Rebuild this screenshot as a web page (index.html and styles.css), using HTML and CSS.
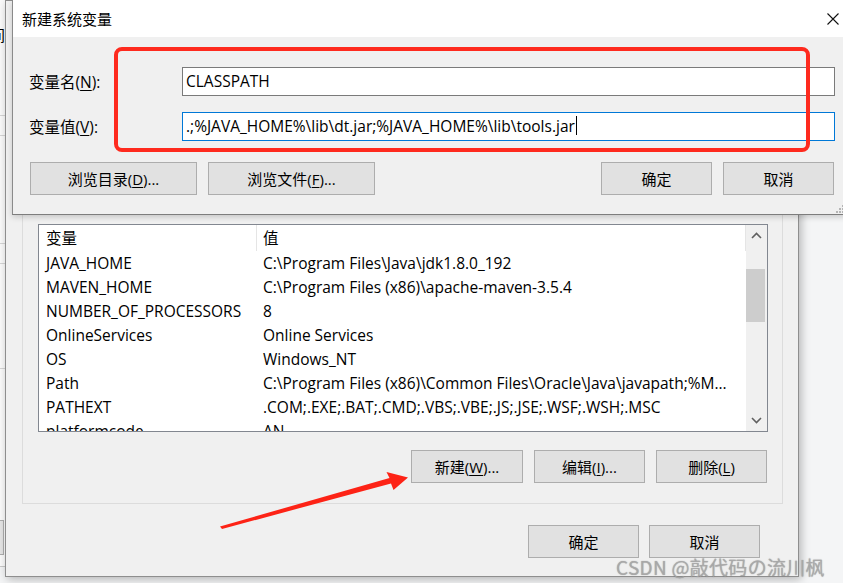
FILE: index.html
```html
<!DOCTYPE html>
<html lang="zh-CN">
<head>
<meta charset="utf-8">
<title>新建系统变量</title>
<link rel="stylesheet" href="styles.css">
</head>
<body>
<div class="desk">
  <div class="bgwin">
    <div class="bg-title">时间</div>
    <div class="bg-line l1"></div>
    <div class="bg-line l2"></div>
    <div class="bg-line l3"></div>
    <div class="bg-line l4"></div>
    <div class="bg-line l5"></div>
    <div class="bg-btn"></div>
  </div>

  <div class="envwin">
    <div class="group">
      <div class="listview">
        <div class="lv-main">
          <div class="lv-head">
            <span class="c1">变量</span><span class="c2">值</span>
          </div>
          <div class="lv-rows">
            <div class="lv-row"><span class="c1">JAVA_HOME</span><span class="c2">C:\Program Files\Java\jdk1.8.0_192</span></div>
            <div class="lv-row"><span class="c1">MAVEN_HOME</span><span class="c2">C:\Program Files (x86)\apache-maven-3.5.4</span></div>
            <div class="lv-row"><span class="c1">NUMBER_OF_PROCESSORS</span><span class="c2">8</span></div>
            <div class="lv-row"><span class="c1">OnlineServices</span><span class="c2">Online Services</span></div>
            <div class="lv-row"><span class="c1">OS</span><span class="c2">Windows_NT</span></div>
            <div class="lv-row"><span class="c1">Path</span><span class="c2">C:\Program Files (x86)\Common Files\Oracle\Java\javapath;%M...</span></div>
            <div class="lv-row"><span class="c1">PATHEXT</span><span class="c2">.COM;.EXE;.BAT;.CMD;.VBS;.VBE;.JS;.JSE;.WSF;.WSH;.MSC</span></div>
            <div class="lv-row"><span class="c1">platformcode</span><span class="c2">AN</span></div>
          </div>
        </div>
        <div class="vscroll">
          <svg class="sarrow" width="21" height="22" viewBox="0 0 21 22"><polyline points="6,13 10.5,8.5 15,13" fill="none" stroke="#606060" stroke-width="1.6"/></svg>
          <div class="strack"><div class="sthumb"></div></div>
          <svg class="sarrow" width="21" height="22" viewBox="0 0 21 22"><polyline points="6,9 10.5,13.5 15,9" fill="none" stroke="#606060" stroke-width="1.6"/></svg>
        </div>
      </div>
      <div class="btnrow grp-btns">
        <div class="btn w112">新建(<u>W</u>)...</div>
        <div class="btn">编辑(<u>I</u>)...</div>
        <div class="btn">删除(<u>L</u>)</div>
      </div>
    </div>
    <div class="btnrow env-btns">
      <div class="btn">确定</div>
      <div class="btn">取消</div>
    </div>
  </div>

  <div class="newdlg">
    <div class="titlebar">
      <span class="title">新建系统变量</span>
      <svg class="close" width="12" height="12" viewBox="0 0 12 12"><path d="M0.5 0.5 L11.5 11.5 M11.5 0.5 L0.5 11.5" stroke="#111" stroke-width="1.1" fill="none"/></svg>
    </div>
    <div class="dlgbody">
      <div class="field">
        <label class="flabel">变量名(<u>N</u>):</label>
        <div class="finput">CLASSPATH</div>
      </div>
      <div class="field">
        <label class="flabel">变量值(<u>V</u>):</label>
        <div class="finput focus">.;%JAVA_HOME%\lib\dt.jar;%JAVA_HOME%\lib\tools.jar<span class="caret"></span></div>
      </div>
      <div class="dlgbtns">
        <div class="btngroup">
          <div class="btn wide">浏览目录(<u>D</u>)...</div>
          <div class="btn wide">浏览文件(<u>F</u>)...</div>
        </div>
        <div class="btngroup">
          <div class="btn">确定</div>
          <div class="btn">取消</div>
        </div>
      </div>
    </div>
    <svg class="grip" width="8" height="8" viewBox="0 0 8 8">
      <rect x="6" y="0" width="2" height="2" fill="#b5b5b5"/>
      <rect x="3" y="3" width="2" height="2" fill="#b5b5b5"/>
      <rect x="6" y="3" width="2" height="2" fill="#b5b5b5"/>
      <rect x="0" y="6" width="2" height="2" fill="#b5b5b5"/>
      <rect x="3" y="6" width="2" height="2" fill="#b5b5b5"/>
      <rect x="6" y="6" width="2" height="2" fill="#b5b5b5"/>
    </svg>
  </div>

  <div class="redbox"></div>
  <svg class="arrow" width="843" height="583" viewBox="0 0 843 583">
    <polygon points="220,526.5 389.5,478 386.5,472 408,477.5 393.5,490 391,483.5 222,529" fill="#fd2316"/>
  </svg>
  <div class="watermark">CSDN @敲代码の流川枫</div>
</div>
</body>
</html>
```

FILE: styles.css
```css
html, body {
  margin: 0;
  padding: 0;
  width: 843px;
  height: 583px;
  overflow: hidden;
  background: #f4f5f6;
  font-family: "Open Sans", "Noto Sans CJK SC", sans-serif;
  font-size: 15.5px;
  color: #000;
}

.desk {
  position: relative;
  width: 843px;
  height: 583px;
  overflow: hidden;
}

u { text-decoration: underline; text-underline-offset: 2px; }

/* background window peeking at the left */
.bgwin {
  position: absolute;
  left: 0;
  top: 0;
  width: 5px;
  height: 566px;
  background: #fbfbfb;
  border-bottom: 1px solid #c9c9c9;
  overflow: hidden;
}
.bg-title {
  position: absolute;
  right: 0;
  top: 24px;
  font-size: 15px;
  white-space: nowrap;
}
.bg-line { position: absolute; left: 0; width: 5px; height: 1px; background: #d6d6d6; }
.l1 { top: 115px; }
.l2 { top: 135px; }
.l3 { top: 243px; }
.l4 { top: 263px; }
.l5 { top: 368px; }
.bg-btn {
  position: absolute;
  left: -4px;
  top: 520px;
  width: 6px;
  height: 33px;
  border: 1px solid #adadad;
  background: #e5e5e5;
}

/* environment variable window (middle layer) */
.envwin {
  position: absolute;
  left: 5px;
  top: 0;
  width: 794px;
  height: 577px;
  box-sizing: border-box;
  border: 1px solid #8e8e8e;
  background: #f0f0f0;
  box-shadow: 2px 2px 9px rgba(0, 0, 0, 0.28);
  padding: 160px 15px 0 16px;
  display: flex;
  flex-direction: column;
}

.group {
  border: 1px solid #dcdcdc;
  padding: 62px 14px 20px 15px;
  display: flex;
  flex-direction: column;
}

.listview {
  height: 208px;
  box-sizing: border-box;
  border: 1px solid #828790;
  background: #fff;
  display: flex;
  overflow: hidden;
}
.lv-main {
  flex: 1;
  display: flex;
  flex-direction: column;
  overflow: hidden;
}
.lv-head {
  height: 27px;
  display: flex;
  align-items: flex-start;
  flex: none;
}
.lv-head .c1 {
  width: 210px;
  padding-left: 7px;
  height: 26px;
  line-height: 26px;
  border-right: 1px solid #e5e5e5;
}
.lv-head .c2 {
  flex: 1;
  padding-left: 6px;
  height: 26px;
  line-height: 26px;
  border-right: 1px solid #e5e5e5;
}
.lv-rows { display: flex; flex-direction: column; }
.lv-row {
  height: 24px;
  line-height: 22px;
  display: flex;
  white-space: nowrap;
  flex: none;
}
.lv-row .c1 { width: 211px; padding-left: 7px; flex: none; }
.lv-row .c2 { padding-left: 6px; }

.vscroll {
  width: 21px;
  flex: none;
  background: #f0f0f0;
  display: flex;
  flex-direction: column;
}
.sarrow { display: block; flex: none; }
.strack { flex: 1; padding-top: 22px; }
.sthumb { width: 19px; height: 53px; background: #cdcdcd; }

.btnrow {
  display: flex;
  justify-content: flex-end;
  gap: 11px;
}
.grp-btns { margin-top: 18px; padding-right: 1px; }
.env-btns { margin-top: 21px; padding-right: 23px; gap: 10px; }

.btn {
  width: 111px;
  height: 33px;
  box-sizing: border-box;
  border: 1px solid #adadad;
  background: #e1e1e1;
  display: flex;
  align-items: center;
  justify-content: center;
  white-space: nowrap;
  font-size: 15px;
}
.btn.w112 { width: 112px; }
.btn.wide { width: 167px; }

/* top dialog */
.newdlg {
  position: absolute;
  left: 12px;
  top: 0;
  width: 835px;
  height: 215px;
  box-sizing: border-box;
  border-left: 1px solid #8a8a8a;
  border-bottom: 1px solid #7d7d7d;
  background: #f0f0f0;
  box-shadow: 0 2px 6px rgba(0, 0, 0, 0.18);
}
.titlebar {
  height: 37px;
  background: #fff;
  display: flex;
  align-items: center;
  justify-content: space-between;
  padding: 0 8px 0 9px;
}
.title { font-size: 15px; }
.close { display: block; }

.dlgbody {
  padding: 30px 0 0 16px;
  display: flex;
  flex-direction: column;
}
.field {
  display: flex;
  align-items: center;
  height: 29px;
}
.field + .field { margin-top: 16px; }
.flabel { width: 153px; flex: none; }
.finput {
  width: 653px;
  height: 29px;
  box-sizing: border-box;
  border: 1px solid #7a7a7a;
  background: #fff;
  padding-left: 3px;
  padding-bottom: 2px;
  display: flex;
  align-items: center;
  white-space: nowrap;
}
.finput.focus { border-color: #0078d7; }
.caret {
  display: inline-block;
  width: 1px;
  height: 19px;
  background: #000;
  margin-left: 1px;
}

.dlgbtns {
  margin-top: 21px;
  margin-left: 1px;
  width: 804px;
  display: flex;
  justify-content: space-between;
}
.btngroup { display: flex; gap: 11px; }

.grip {
  position: absolute;
  right: 3px;
  bottom: 1px;
}

/* annotations */
.redbox {
  position: absolute;
  left: 114px;
  top: 47px;
  width: 696px;
  height: 105px;
  box-sizing: border-box;
  border: 4px solid #fe2a1e;
  border-radius: 8px;
}
.arrow {
  position: absolute;
  left: 0;
  top: 0;
}
.watermark {
  position: absolute;
  left: 616px;
  top: 553px;
  font-family: "Noto Sans CJK SC", sans-serif;
  font-size: 19px;
  color: rgba(170, 170, 170, 0.8);
  text-shadow: 0 0 1px rgba(80, 80, 80, 0.55);
  white-space: nowrap;
  letter-spacing: 0.3px;
}
```
